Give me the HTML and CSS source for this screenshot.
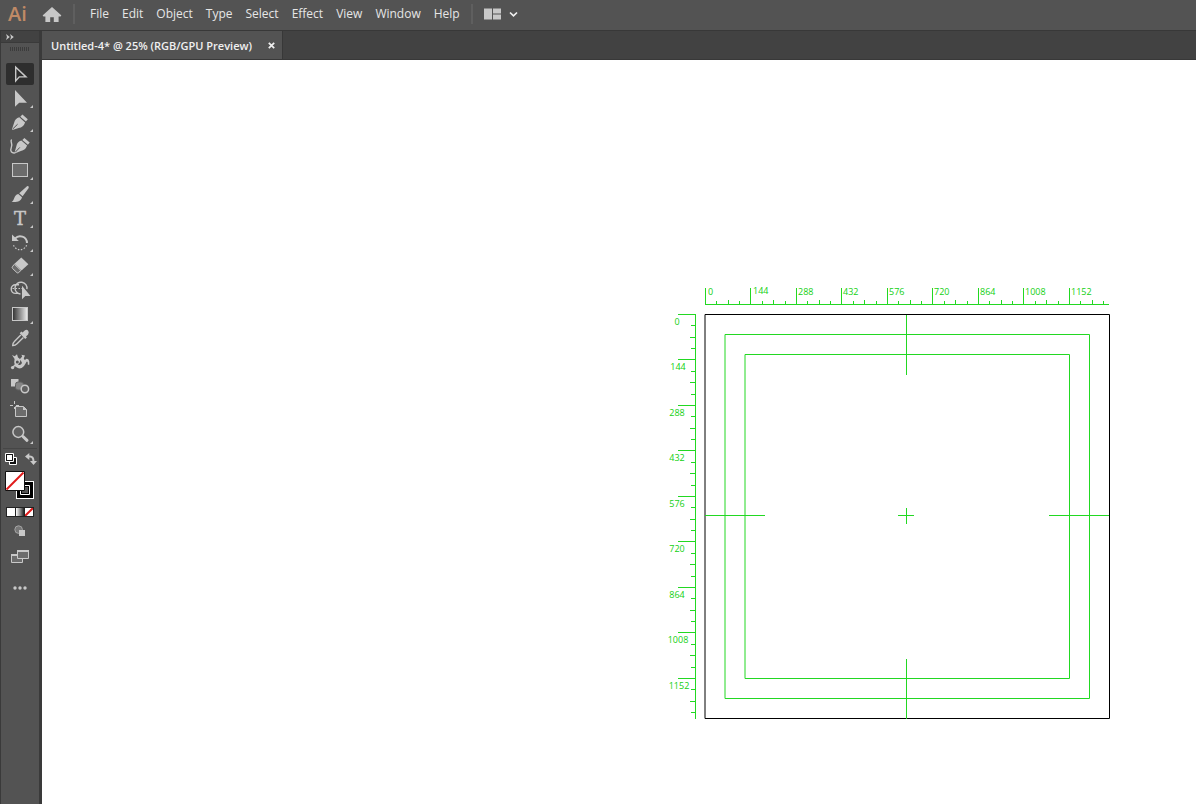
FILE: index.html
```
<!DOCTYPE html>
<html lang="en">
<head>
<meta charset="utf-8">
<title>Untitled-4</title>
<link rel="stylesheet" href="styles.css">
</head>
<body>
<div class="app">
  <header class="menubar">
    <span class="logo">Ai</span>
    <button class="home" aria-label="Home">
      <svg width="20" height="18" viewBox="0 0 20 18"><path class="f" d="M10 1 19.2 9.3Q19.5 10.3 18.3 10.4H16.6V16H11.8V11.2H8.2V16H3.4V10.4H1.7Q.5 10.3.8 9.3Z"/></svg>
    </button>
    <span class="divider"></span>
    <nav class="menus">
      <button>File</button><button>Edit</button><button>Object</button><button>Type</button><button>Select</button><button>Effect</button><button>View</button><button>Window</button><button>Help</button>
    </nav>
    <span class="divider"></span>
    <button class="layout" aria-label="Arrange documents">
      <svg width="34" height="12" viewBox="0 0 34 12"><path class="f" d="M0 .5H8V11.5H0ZM9 .5H17V5.5H9ZM9 6.5H17V11.5H9Z"/><path class="chev" d="M26 4.5 29.5 7.8 33 4.5"/></svg>
    </button>
  </header>

  <div class="body">
    <aside class="sidebar">
      <button class="collapse" aria-label="Expand panel"><svg width="8" height="6" viewBox="0 0 8 6"><path class="f" d="M0 0 3.8 3 0 6 1 3ZM4 0 7.8 3 4 6 5 3Z"/></svg></button>
      <div class="panel">
        <div class="grip"></div>
        <div class="tools">
          <button class="tool active" aria-label="Selection"><svg viewBox="0 0 28 22"><path class="pointer" d="M9.7 4.2V18L13.3 13.9H20Z"/></svg></button>
          <button class="tool more" aria-label="Direct selection"><svg viewBox="0 0 28 22"><path class="f" d="M9 3V19.8L13.2 15.8H21Z"/></svg></button>
          <button class="tool more" aria-label="Pen"><svg viewBox="0 0 28 22"><path class="f" d="M16.4 3.6 21.8 8.3 19.9 10.6 14.3 5.7ZM13.3 6.3 19.1 11.4Q17.5 16.2 12.7 17L6.4 18.9 5.9 18.4 8.2 11.5Q9 7.5 13.3 6.3Z"/><path class="cut" d="M6.6 18.1 11.6 13.2"/></svg></button>
          <button class="tool" aria-label="Curvature"><svg viewBox="0 0 28 22"><path class="pointer" d="M5.6 4.5C3.5 6.5 7.5 9 5.3 12.5C3.8 16 5.6 18.5 9.2 17.8"/><path class="f" d="M18.4 3 23.7 7.5 21.9 9.7 16.3 4.9ZM15.3 5.5 21.1 10.5Q19.5 15.1 14.9 15.9L9.2 18.2 8.6 17.6 10.4 10.9Q11.2 6.7 15.3 5.5Z"/><path class="cut" d="M9.2 17.3 13.8 12.4"/></svg></button>
          <button class="tool more" aria-label="Rectangle"><svg viewBox="0 0 28 22"><rect class="box" x="6.5" y="4.5" width="15" height="13"/></svg></button>
          <button class="tool more" aria-label="Paintbrush"><svg viewBox="0 0 28 22"><path class="f" d="M21 3.2Q23.2 2.6 22.7 4.9L16.6 13.3 13.2 10.3ZM12.3 11 16 14.3C15 18.4 11 19.5 5.6 18.9C8.8 17.3 7.6 12 12.3 11Z"/></svg></button>
          <button class="tool more" aria-label="Type"><svg viewBox="0 0 28 22"><text class="glyph" x="14" y="18">T</text></svg></button>
          <button class="tool more" aria-label="Rotate"><svg viewBox="0 0 28 22"><path class="thick" d="M9 7.6C13 3 20.8 5.4 21 12"/><path class="f" d="M6 3.4V10H12.8Z"/><path class="dots" d="M20.6 14.2A7 7 0 0 1 7.2 13"/></svg></button>
          <button class="tool more" aria-label="Eraser"><svg viewBox="0 0 28 22"><path class="f" d="M15.3 2.6 22.4 9.2 15.5 15.6 8.5 8.8Z"/><path class="box" d="M8.4 9.2 14.9 15.5 12.3 17.8Q11.6 18.2 10.9 17.6L6.4 13.3Q5.8 12.5 6.4 11.7Z"/></svg></button>
          <button class="tool" aria-label="Shape builder"><svg viewBox="0 0 28 22"><path class="pointer" d="M14.5 15A6 5.9 0 1 1 20.9 10.2M13 14.4H9.5A4.3 4.3 0 0 1 9.5 5.8H13"/><path class="dots" d="M6.5 9.5H17"/><path class="f" d="M16 6.8V20.2L19.3 17H24.5Z"/></svg></button>
          <button class="tool more" aria-label="Gradient"><svg viewBox="0 0 28 22"><defs><linearGradient id="ramp"><stop offset="0" stop-color="#303030"/><stop offset="1" stop-color="#eee"/></linearGradient></defs><rect class="ramp" x="6.5" y="4.5" width="15" height="13"/></svg></button>
          <button class="tool" aria-label="Eyedropper"><svg viewBox="0 0 28 22"><path class="f" d="M13.7 6.2 15.4 4.6 16.6 5.5 18.7 3.6Q20.5 2.1 22 3.6T22.1 7.4L20 9.5 20.9 10.4 19.2 12Z"/><path class="pointer" d="M14.8 8 8.4 14.4Q6.5 16.2 6.7 18.5 9.1 18.6 11 16.7L17.4 10.5"/></svg></button>
          <button class="tool" aria-label="Puppet warp"><svg viewBox="0 0 28 22"><path class="f" d="M6 4 8.7 5.2 11 3.3 12 6.5Q15.5 8.5 13.7 11.4L12 13.5Q14.5 15.2 16 12 15 9.5 13.8 8.3L16.2 5.5 15.4 3.8 19 4.5 17.8 7.3Q18.3 10 20 8 22.8 7.3 23.3 10.5V13.7H21.8Q22 9.8 20.6 10.8C18.5 15 16 18.2 12.3 17.3L9.2 15.6 8.2 11.2 8.6 8Z"/><path class="pointer" d="M6.5 16.6 11 12.2"/><circle class="hole" cx="11.3" cy="11" r="1.5"/><circle class="f" cx="6.6" cy="16.6" r="1.7"/></svg></button>
          <button class="tool" aria-label="Blend"><svg viewBox="0 0 28 22"><path class="f" d="M5 4H12.5V11.5H5Z"/><rect class="mid" x="9.5" y="7" width="8" height="8" rx="2.5"/><circle class="ring slim" cx="18.9" cy="14" r="3.7"/></svg></button>
          <button class="tool" aria-label="Artboard"><svg viewBox="0 0 28 22"><path class="box" d="M9.5 7.5H17.5L20.5 10.5V17.5H9.5Z"/><path class="f" d="M17 7.5V11H20.8Z"/><path class="s" d="M4 6.5H7M10 6.5H13M8.5 2V5M8.5 8V10"/></svg></button>
          <button class="tool more" aria-label="Zoom"><svg viewBox="0 0 28 22"><circle class="ring slim" cx="12.3" cy="9" r="5.4"/><path class="handle" d="M17 13.5 21 17.3"/></svg></button>
        </div>
        <div class="colors">
          <div class="row">
            <button aria-label="Default fill and stroke"><svg width="12" height="12" viewBox="0 0 12 12"><path class="frame" d="M4.5 4.5H11.5V11.5H4.5Z"/><path class="frame" d="M.5.5H8.5V8.5H.5Z"/><path class="chip" d="M1.5 1.5H7.5V7.5H1.5Z"/></svg></button>
            <button aria-label="Swap fill and stroke"><svg width="12" height="12" viewBox="0 0 12 12"><path class="thick" d="M3 3.5H5Q8.5 3.5 8.5 8.5"/><path class="f" d="M0 3.5 4.3 0V7ZM5 8H12L8.5 12Z"/></svg></button>
          </div>
          <div class="pair">
            <button class="stroke" aria-label="Stroke color"><svg width="18" height="18" viewBox="0 0 18 18"><path d="M0 0H18V18H0Z" fill="#fff"/><path d="M1 1H17V17H1Z" fill="#000"/><path d="M4.5 4.5H13.5V13.5H4.5Z" fill="#000" stroke="#fff"/><path d="M6 6H12V12H6Z" fill="#535353"/></svg></button>
            <button class="fill" aria-label="Fill color"><svg width="20" height="20" viewBox="0 0 20 20"><path class="chip" d="M.5.5H19.5V19.5H.5Z"/><path class="slash" d="M1.5 18.5 18.5 1.5"/></svg></button>
          </div>
          <div class="modes">
            <button class="solid" aria-label="Color"></button><button class="grad" aria-label="Gradient fill"></button><button class="none" aria-label="None"><svg width="8" height="8" viewBox="0 0 8 8"><path class="slash" d="M0 8 8 0"/></svg></button>
          </div>
        </div>
        <div class="views">
          <button aria-label="Drawing mode"><svg width="12" height="12" viewBox="0 0 12 12"><circle cx="4.6" cy="4.6" r="3.8" fill="#777" stroke="#a5a5a5"/><path class="f" d="M5 5H11V11H5Z"/></svg></button>
          <button aria-label="Screen mode"><svg width="18" height="13" viewBox="0 0 18 13"><path class="box" d="M.5 4.5H11.5V12.5H.5Z"/><path class="box" d="M6.5.5H17.5V8.5H6.5Z"/><path class="f" d="M6 0H18V2H6ZM0 4H6V6H0Z"/></svg></button>
          <button aria-label="Edit toolbar"><svg width="14" height="4" viewBox="0 0 14 4"><circle class="f" cx="2" cy="2" r="1.7"/><circle class="f" cx="7" cy="2" r="1.7"/><circle class="f" cx="12" cy="2" r="1.7"/></svg></button>
        </div>
      </div>
    </aside>

    <main class="document">
      <div class="tabs">
        <div class="tab"><span>Untitled-4* @ 25% (RGB/GPU Preview)</span>
          <button aria-label="Close"><svg width="7" height="7" viewBox="0 0 7 7"><path class="x" d="M.8.8 6.2 6.2M6.2.8.8 6.2"/></svg></button></div>
      </div>
      <div class="canvas">
        <svg class="artboard" width="456" height="446" viewBox="660 276 456 446">
          <g transform="translate(.5 .5)" stroke-linecap="square">
            <path class="edge" d="M705 314H1109V718H705Z"/>
            <g class="guide">
              <path d="M725 334H1089V698H725ZM745 354H1069V678H745Z"/>
              <path d="M906 315V374M906 659V718M705 515H764M1049 515H1108M898 515H913M906 508V523"/>
              <!-- horizontal ruler -->
              <path d="M705 304H1108M705 288V304M750 288V304M796 288V304M841 288V304M887 288V304M932 288V304M978 288V304M1023 288V304M1069 288V304"/>
              <path d="M716 301v3M728 300v4M739 301v3M762 301v3M773 300v4M785 301v3M807 301v3M819 300v4M830 301v3M853 301v3M864 300v4M876 301v3M898 301v3M910 300v4M921 301v3M944 301v3M955 300v4M967 301v3M989 301v3M1001 300v4M1012 301v3M1035 301v3M1046 300v4M1058 301v3M1080 301v3M1092 300v4M1103 301v3"/>
              <!-- vertical ruler -->
              <path d="M695 314V718M678 314H695M678 359H695M678 405H695M678 450H695M678 496H695M678 541H695M678 587H695M678 632H695M678 678H695"/>
              <path d="M691 325h4M690 337h5M691 348h4M691 371h4M690 382h5M691 394h4M691 416h4M690 428h5M691 439h4M691 462h4M690 473h5M691 485h4M691 507h4M690 519h5M691 530h4M691 553h4M690 564h5M691 576h4M691 598h4M690 610h5M691 621h4M691 644h4M690 655h5M691 667h4M691 689h4M690 701h5M691 712h4"/>
            </g>
          </g>
          <g class="labels">
            <text x="708" y="295">0</text><text x="753" y="294">144</text><text x="798" y="295">288</text><text x="843" y="295">432</text><text x="889" y="295">576</text><text x="934" y="295">720</text><text x="980" y="295">864</text><text x="1025" y="295">1008</text><text x="1071" y="295">1152</text>
          </g>
          <g class="labels side">
            <text x="677" y="325">0</text><text x="678" y="370">144</text><text x="677" y="416">288</text><text x="677" y="461">432</text><text x="677" y="507">576</text><text x="677" y="552">720</text><text x="677" y="598">864</text><text x="678" y="643">1008</text><text x="679" y="689">1152</text>
          </g>
        </svg>
      </div>
    </main>
  </div>
</div>
</body>
</html>
```
FILE: styles.css
```
* { box-sizing: border-box; }
body { margin: 0; font-family: "Open Sans", "Noto Sans", sans-serif; font-size: 12px; color: #e6e6e6; background: #535353; }
button { display: flex; align-items: center; justify-content: center; padding: 0; border: 0; background: none; color: inherit; font: inherit; }
svg { display: block; }

.app { display: flex; flex-direction: column; height: 100vh; overflow: hidden; }

.menubar { display: flex; align-items: center; flex: none; height: 31px; padding: 0 8px 3px; background: #535353; border-bottom: 1px solid #383838; }
.logo { width: 34px; color: #c08a66; font-size: 20px; line-height: 26px; font-weight: 600; }
.home { width: 20px; height: 20px; padding-top: 3px; }
.divider { width: 2px; height: 20px; margin-left: 11px; background: #5f5f5f; }
.menus { display: flex; gap: 13px; margin-left: 15px; }
.layout { margin-left: 11px; }

.body { display: flex; flex: 1; min-height: 0; }
.sidebar { display: flex; flex-direction: column; flex: none; width: 42px; padding: 0 3px 0 1px; background: #3a3a3a; }
.collapse { justify-content: flex-start; height: 11px; padding-left: 5px; background: #424242; }
.panel { display: flex; flex-direction: column; align-items: center; flex: 1; margin-top: 1px; background: #535353; }
.grip { width: 20px; height: 4px; margin: 4px 0 12px; background: repeating-linear-gradient(90deg, #3c3c3c 0 1px, #535353 1px 2px); }
.tools { display: flex; flex-direction: column; gap: 2px; }
.tool { position: relative; width: 28px; height: 22px; border-radius: 2px; }
.tool svg { width: 28px; height: 22px; overflow: visible; }
.active { background: #2e2e2e; }
.more::after { content: ""; position: absolute; right: 1px; bottom: 1px; border-left: 3px solid transparent; border-bottom: 3px solid #c8c8c8; }

.colors { width: 34px; margin-top: 3px; padding: 4px 0 0 2px; border-top: 1px solid #464646; }
.row { display: flex; justify-content: space-between; height: 12px; }
.pair { display: grid; width: 29px; margin-top: 6px; }
.pair button { grid-area: 1 / 1; }
.fill { place-self: start; }
.stroke { place-self: end; margin-top: 10px; }
.modes { display: flex; gap: 1px; width: 28px; height: 10px; margin: 8px 0 0 1px; border: 1px solid #222; background: #222; }
.modes button { flex: 1; overflow: hidden; }
.solid, .modes .none { background: #fff; }
.grad { background: linear-gradient(90deg, #fff, #222); }
.views { display: flex; flex-direction: column; align-items: center; }
.views button { height: 22px; }
.views button:first-child { height: 28px; }
.views button:last-child { height: 42px; }

.document { display: flex; flex-direction: column; flex: 1; min-width: 0; }
.tabs { display: flex; flex: none; height: 29px; background: #424242; border-bottom: 1px solid #383838; }
.tab { display: flex; align-items: center; gap: 16px; padding: 0 7px 0 9px; border-right: 1px solid #383838; background: #535353; color: #f0f0f0; font-size: 11px; font-weight: 600; white-space: nowrap; }
.canvas { position: relative; flex: 1; overflow: hidden; background: #fff; }
.artboard { position: absolute; left: 618px; top: 216px; }

.f { fill: #c8c8c8; }
.s, .pointer, .thick, .chev, .x, .dots, .ring, .handle { fill: none; stroke: #c8c8c8; }
.pointer { stroke-width: 1.4px; }
.thick { stroke-width: 2px; }
.chev, .x { stroke: #f0f0f0; stroke-width: 1.7px; }
.dots { stroke-dasharray: 1.5 1.5; stroke-width: 1.2px; }
.handle { stroke-width: 3px; stroke-linecap: round; }
.ring { fill: #606060; }
.slim { stroke-width: 1.5px; }
.box { fill: #6c6c6c; stroke: #c8c8c8; }
.mid { fill: #858585; stroke: #606060; }
.cut { stroke: #535353; }
.hole { fill: #535353; }
.glyph { fill: #c8c8c8; stroke: #c8c8c8; stroke-width: .4px; font: 18px "DejaVu Serif", serif; text-anchor: middle; }
.ramp { fill: url(#ramp); stroke: #c8c8c8; }
.chip { fill: #fff; stroke: #111; }
.frame { fill: #111; stroke: #fff; }
.slash { fill: none; stroke: #e01b1b; stroke-width: 2px; }

.edge { fill: none; stroke: #000; }
.guide { fill: none; stroke: #22d822; }
.labels { fill: #12d012; font-size: 9px; font-weight: 500; }
.side { text-anchor: middle; }
```
